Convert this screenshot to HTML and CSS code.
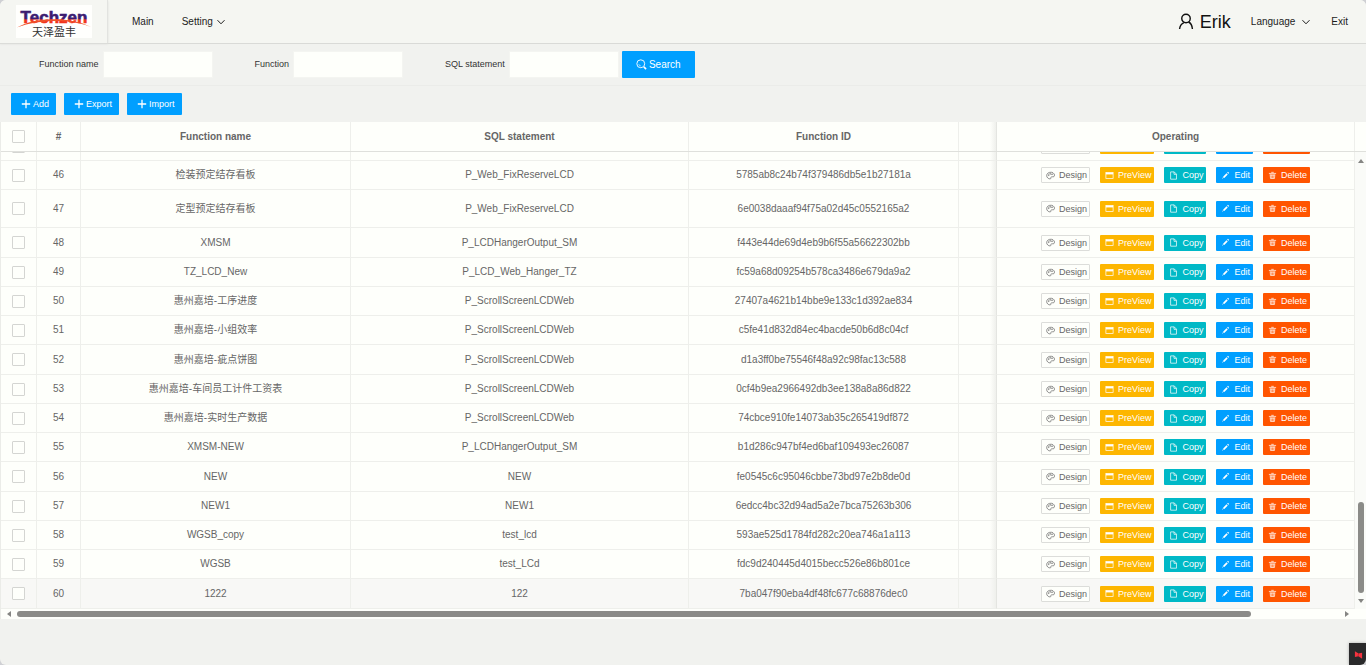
FILE: index.html
```html
<!DOCTYPE html>
<html lang="en">
<head>
<meta charset="utf-8">
<title>Techzen</title>
<link rel="stylesheet" href="styles.css">
</head>
<body>
<svg class="sprite" aria-hidden="true">
  <symbol id="i-plus" viewBox="0 0 10 10"><path d="M5 .8v8.400M.8 5h8.400" stroke-width="1.300"/></symbol>
  <symbol id="i-chevron" viewBox="0 0 10 10"><path d="M1.5 3.2 5 6.8l3.5-3.6" stroke-width="1"/></symbol>
  <symbol id="i-search" viewBox="0 0 12 12"><circle cx="5.2" cy="5.2" r="4.3"/><path d="M3 5.4A2.3 2.3 0 0 0 5.4 7.6" stroke-width=".6"/><path d="m8.6 8.600 2.400 2.400" stroke-width="1.8"/></symbol>
  <symbol id="i-user" viewBox="0 0 16 18"><circle cx="8" cy="5.8" r="4.500"/><path d="M1.200 17c.3-3.600 2-5.800 4.600-6.900M10.600 9.500c2.400 1 3.900 3.600 4.200 7.500"/></symbol>
  <symbol id="i-design" viewBox="0 0 10 10"><path d="M2 7.800C.3 6.600.3 3.700 2.200 2.300 4.300.800 7.900 1.100 9.100 3.300c.8 1.700 0 3.300-1.200 3.200-1-.1-1.900-.4-2.300.4-.4.900.1 1.900-1.200 1.900C3.500 8.800 2.700 8.400 2 7.800Z"/><circle cx="3" cy="4.600" r=".5"/><circle cx="4.600" cy="3.200" r=".5"/><circle cx="6.700" cy="3.600" r=".5"/></symbol>
  <symbol id="i-window" viewBox="0 0 10 10"><rect x="1" y="1.800" width="8" height="6.400"/><path d="M1 2.800h8" stroke-width="2"/></symbol>
  <symbol id="i-file" viewBox="0 0 10 10"><path d="M1.800 1h4L8.300 3.500v5.600H1.800ZM5.600 1v2.700h2.700"/></symbol>
  <symbol id="i-edit" viewBox="0 0 10 10"><path d="m3 7 3.800-3.800M7.500 2.500l.9-.9" stroke-width="1.900"/><path d="m1.700 8.400 1.200-1.700"/></symbol>
  <symbol id="i-trash" viewBox="0 0 10 10"><path d="M1 2.700h8M3.600 1.500h2.800M2.400 3.700l.4 4.600h4.400l.4-4.600M2.500 4.500h5M4.200 4v4M5.800 4v4"/></symbol>
</svg>

<div class="page">
  <header class="topbar">
    <a class="brand" href="#">
      <svg class="brand-mark" viewBox="0 0 76 33" role="img" aria-label="Techzen">
        <defs>
          <linearGradient id="ink" gradientUnits="userSpaceOnUse" x1="0" y1="0" x2="0" y2="33">
            <stop offset=".42" stop-color="#3c1c70"/><stop offset=".45" stop-color="#f0341c"/>
          </linearGradient>
        </defs>
        <text class="brand-name" x="38" y="18" text-anchor="middle" fill="url(#ink)" stroke="url(#ink)">Techzen</text>
        <path d="M1 22.500C18 12 54 11 75 22 54 14 24 14 1 22.500Z" fill="#f0502a"/>
        <text class="brand-cn" x="38" y="31" text-anchor="middle">天泽盈丰</text>
      </svg>
    </a>
    <nav class="menu">
      <a href="#">Main</a>
      <a href="#">Setting <svg class="icon"><use href="#i-chevron"/></svg></a>
    </nav>
    <nav class="account">
      <a class="user" href="#"><svg class="user-icon"><use href="#i-user"/></svg>Erik</a>
      <a class="language" href="#">Language <svg class="icon"><use href="#i-chevron"/></svg></a>
      <a href="#">Exit</a>
    </nav>
  </header>

  <form class="filters">
    <div class="field"><label for="f-name">Function name</label><input id="f-name" type="text"></div>
    <div class="field"><label for="f-func">Function</label><input id="f-func" type="text"></div>
    <div class="field"><label for="f-sql">SQL statement</label><input id="f-sql" type="text"></div>
    <button class="search" type="button"><svg class="search-icon"><use href="#i-search"/></svg>Search</button>
  </form>

  <div class="toolbar">
    <button type="button"><svg class="icon"><use href="#i-plus"/></svg>Add</button>
    <button type="button"><svg class="icon"><use href="#i-plus"/></svg>Export</button>
    <button type="button"><svg class="icon"><use href="#i-plus"/></svg>Import</button>
  </div>

  <main class="grid">
    <div class="grid-head">
      <table class="data">
        <colgroup><col class="c-check"><col class="c-num"><col class="c-name"><col class="c-sql"><col class="c-id"><col><col class="c-ops"></colgroup>
        <thead><tr>
          <th><input type="checkbox" aria-label="Select all"></th><th>#</th><th>Function name</th><th>SQL statement</th><th>Function ID</th><th class="edge"></th><th>Operating</th>
        </tr></thead>
      </table>
      <div class="gutter"></div>
    </div>
    <div class="grid-body">
      <div class="rows">
        <table class="data">
          <colgroup><col class="c-check"><col class="c-num"><col class="c-name"><col class="c-sql"><col class="c-id"><col><col class="c-ops"></colgroup>
          <tbody id="rows"></tbody>
        </table>
      </div>
      <div class="vscroll"><i class="arrow up"></i><i class="space"></i><i class="thumb"></i><i class="arrow down"></i></div>
    </div>
    <div class="hscroll"><i class="arrow left"></i><i class="thumb"></i><i class="space"></i><i class="arrow right"></i></div>
  </main>

  <div class="badge"><svg viewBox="0 0 10 10"><path d="M1 .8 5 3.400 9 2.600V9.200L5 6.500 1 7.300Z" fill="#f5333f"/><path d="M5 3.200 4.400 6.800" stroke="#8c1820" stroke-width=".6"/></svg></div>
</div>
<script src="app.js"></script>
</body>
</html>
```
FILE: styles.css
```css
* { box-sizing: border-box; }

html { background: #cfd0d4; }

body {
  margin: 0;
  color: #666;
  font: 10px/14px "Liberation Sans", Arial, "Noto Sans CJK SC", sans-serif;
}

a { color: #1c1c1c; text-decoration: none; }

button, input { font: inherit; margin: 0; }

svg { fill: none; stroke: currentColor; }

.sprite { display: none; }

.icon { width: 10px; height: 10px; flex: none; }

.page {
  position: relative;
  min-height: 100vh;
  background: #f1f2ef;
  border-radius: 6px;
  overflow: hidden;
}

/* top bar */
.topbar {
  display: flex;
  align-items: stretch;
  height: 44px;
  background: #f5f6f2;
  border-bottom: 1px solid #d9dad7;
}

.brand {
  display: flex;
  align-items: center;
  width: 108px;
  padding-left: 16px;
  border-right: 1px solid #e2e3e0;
  box-shadow: 0 1px 2px #dcddda;
}

.brand-mark { width: 76px; height: 33px; background: #fffffd; stroke: none; }

.brand-name { font: bold 17px "Liberation Sans", sans-serif; stroke-width: .6; }

.brand-cn { font: 11px "Noto Sans CJK SC", sans-serif; fill: #333; }

.menu, .account { display: flex; align-items: center; }

.menu { gap: 28px; padding-left: 24px; }

.menu a, .account a { display: flex; align-items: center; gap: 6px; }

.menu a { gap: 3px; }

.account { gap: 20px; margin-left: auto; padding-right: 18px; }

.account .user { font-size: 18px; line-height: 22px; color: #111; }

.user-icon { width: 16px; height: 17px; stroke-width: 1.5; }

/* filters */
.filters {
  display: flex;
  align-items: center;
  height: 42px;
  padding-left: 39px;
  border-bottom: 1px solid #ebece9;
}

.field { display: flex; align-items: center; gap: 4px; margin-right: 42px; color: #333; font-size: 9px; }

.field:nth-of-type(3) { margin-right: 3px; }

.field input {
  width: 110px;
  height: 27px;
  padding: 0 8px;
  border: 1px solid #f4f5f1;
  background: #fefffb;
}

.field label { padding-bottom: 2px; }

button {
  display: flex;
  align-items: center;
  justify-content: center;
  border: 0;
  border-radius: 1px;
  color: #fff;
  background: #009fff;
  white-space: nowrap;
}

.search { width: 73px; height: 27px; gap: 2px; }

.search-icon { width: 11px; height: 11px; }

/* toolbar */
.toolbar { display: flex; align-items: center; gap: 8px; height: 36px; padding-left: 11px; }

.toolbar button { height: 22px; padding: 0 7px 0 10px; gap: 2px; font-size: 9px; }

/* table */
.grid { border-left: 1px solid #ebece8; background: #fefffb; }

.grid-head { display: flex; border-bottom: 1px solid #dfe0dc; }

.gutter { width: 11px; }

.data { width: 100%; table-layout: fixed; border-collapse: separate; border-spacing: 0; }

.c-check { width: 36px; }
.c-num { width: 44px; }
.c-name { width: 270px; }
.c-sql { width: 338px; }
.c-id { width: 270px; }
.c-ops { width: 358px; }

.data th, .data td {
  height: 29px;
  padding: 0;
  border-right: 1px solid #eeefeb;
  text-align: center;
  white-space: nowrap;
}

.data td { border-bottom: 1px solid #eeefeb; }

.data tr:nth-child(4n) td { height: 30px; }

.data .tall td { height: 38px; }

.data .hover td { background-color: #f8f8f6; }

.data .edge {
  border-right-color: #e4e5e1;
  background-image: linear-gradient(to left, #eff0ec, transparent 6px);
}

input[type="checkbox"] {
  display: block;
  width: 13px;
  height: 13px;
  margin: 0 auto;
  appearance: none;
  border: 1px solid #d4d5d2;
  border-radius: 1px;
  background: #fefffb;
}

.grid-body { display: flex; height: 457px; }

.rows { display: flex; flex: 1; align-items: flex-end; overflow: hidden; }

.actions { display: flex; justify-content: center; gap: 10px; }

.actions button { height: 16px; padding: 0 3px 0 5px; gap: 4px; font-size: 9px; line-height: 14px; }

.actions .design { padding: 0 2px 0 4px; color: #666; background: #fefffb; border: 1px solid #dcddda; }
.actions .preview { background: #fdb600; }
.actions .copy { background: #00b9c6; }
.actions .edit { background: #009fff; }
.actions .delete { background: #ff5500; }

.actions .icon { width: 9px; height: 9px; stroke-width: .8; }

/* scroll bars */
.vscroll {
  display: flex;
  flex-direction: column;
  align-items: center;
  width: 11px;
  padding: 7px 0 6px;
  background: #fafbf8;
}

.hscroll { display: flex; align-items: center; height: 10px; padding: 0 17px 0 6px; }

.thumb { background: #8b8b88; border-radius: 3px; }

.vscroll .thumb { width: 6px; height: 91px; margin-bottom: 6px; }
.hscroll .thumb { flex: 0 1 1234px; height: 6px; margin-left: 6px; }

.space { flex: 1; }

.arrow { border: 3px solid transparent; }
.up { border-top: 0; border-bottom: 4px solid #858583; }
.down { border-bottom: 0; border-top: 4px solid #858583; }
.left { border-left: 0; border-right: 4px solid #858583; }
.right { border-right: 0; border-left: 4px solid #858583; }

/* corner badge */
.badge {
  position: absolute;
  right: 0;
  bottom: 0;
  width: 17px;
  height: 22px;
  padding: 7px 3px 5px 5px;
  background: #2a2a2b;
  box-shadow: 0 0 3px #aaa;
}

.badge svg { display: block; width: 9px; height: 10px; stroke: none; }
```
FILE: app.js
```js
const records = [
  [45, "", "", ""],
  [46, "检装预定结存看板", "P_Web_FixReserveLCD", "5785ab8c24b74f379486db5e1b27181a"],
  [47, "定型预定结存看板", "P_Web_FixReserveLCD", "6e0038daaaf94f75a02d45c0552165a2", "tall"],
  [48, "XMSM", "P_LCDHangerOutput_SM", "f443e44de69d4eb9b6f55a56622302bb"],
  [49, "TZ_LCD_New", "P_LCD_Web_Hanger_TZ", "fc59a68d09254b578ca3486e679da9a2"],
  [50, "惠州嘉培-工序进度", "P_ScrollScreenLCDWeb", "27407a4621b14bbe9e133c1d392ae834"],
  [51, "惠州嘉培-小组效率", "P_ScrollScreenLCDWeb", "c5fe41d832d84ec4bacde50b6d8c04cf"],
  [52, "惠州嘉培-疵点饼图", "P_ScrollScreenLCDWeb", "d1a3ff0be75546f48a92c98fac13c588"],
  [53, "惠州嘉培-车间员工计件工资表", "P_ScrollScreenLCDWeb", "0cf4b9ea2966492db3ee138a8a86d822"],
  [54, "惠州嘉培-实时生产数据", "P_ScrollScreenLCDWeb", "74cbce910fe14073ab35c265419df872"],
  [55, "XMSM-NEW", "P_LCDHangerOutput_SM", "b1d286c947bf4ed6baf109493ec26087"],
  [56, "NEW", "NEW", "fe0545c6c95046cbbe73bd97e2b8de0d"],
  [57, "NEW1", "NEW1", "6edcc4bc32d94ad5a2e7bca75263b306"],
  [58, "WGSB_copy", "test_lcd", "593ae525d1784fd282c20ea746a1a113"],
  [59, "WGSB", "test_LCd", "fdc9d240445d4015becc526e86b801ce"],
  [60, "1222", "122", "7ba047f90eba4df48fc677c68876dec0", "hover"]
];

const actions = [
  ["design", "Design", "design"],
  ["preview", "PreView", "window"],
  ["copy", "Copy", "file"],
  ["edit", "Edit", "edit"],
  ["delete", "Delete", "trash"]
];

const buttons = actions.map(([cls, label, icon]) =>
  `<button type="button" class="${cls}"><svg class="icon"><use href="#i-${icon}"/></svg>${label}</button>`
).join("");

document.getElementById("rows").innerHTML = records.map(([num, name, sql, id, cls = ""]) =>
  `<tr class="${cls}"><td><input type="checkbox" aria-label="Select row ${num}"></td><td>${name ? num : ""}</td>` +
  `<td>${name}</td><td>${sql}</td><td>${id}</td><td class="edge"></td>` +
  `<td><div class="actions">${buttons}</div></td></tr>`
).join("");
```
